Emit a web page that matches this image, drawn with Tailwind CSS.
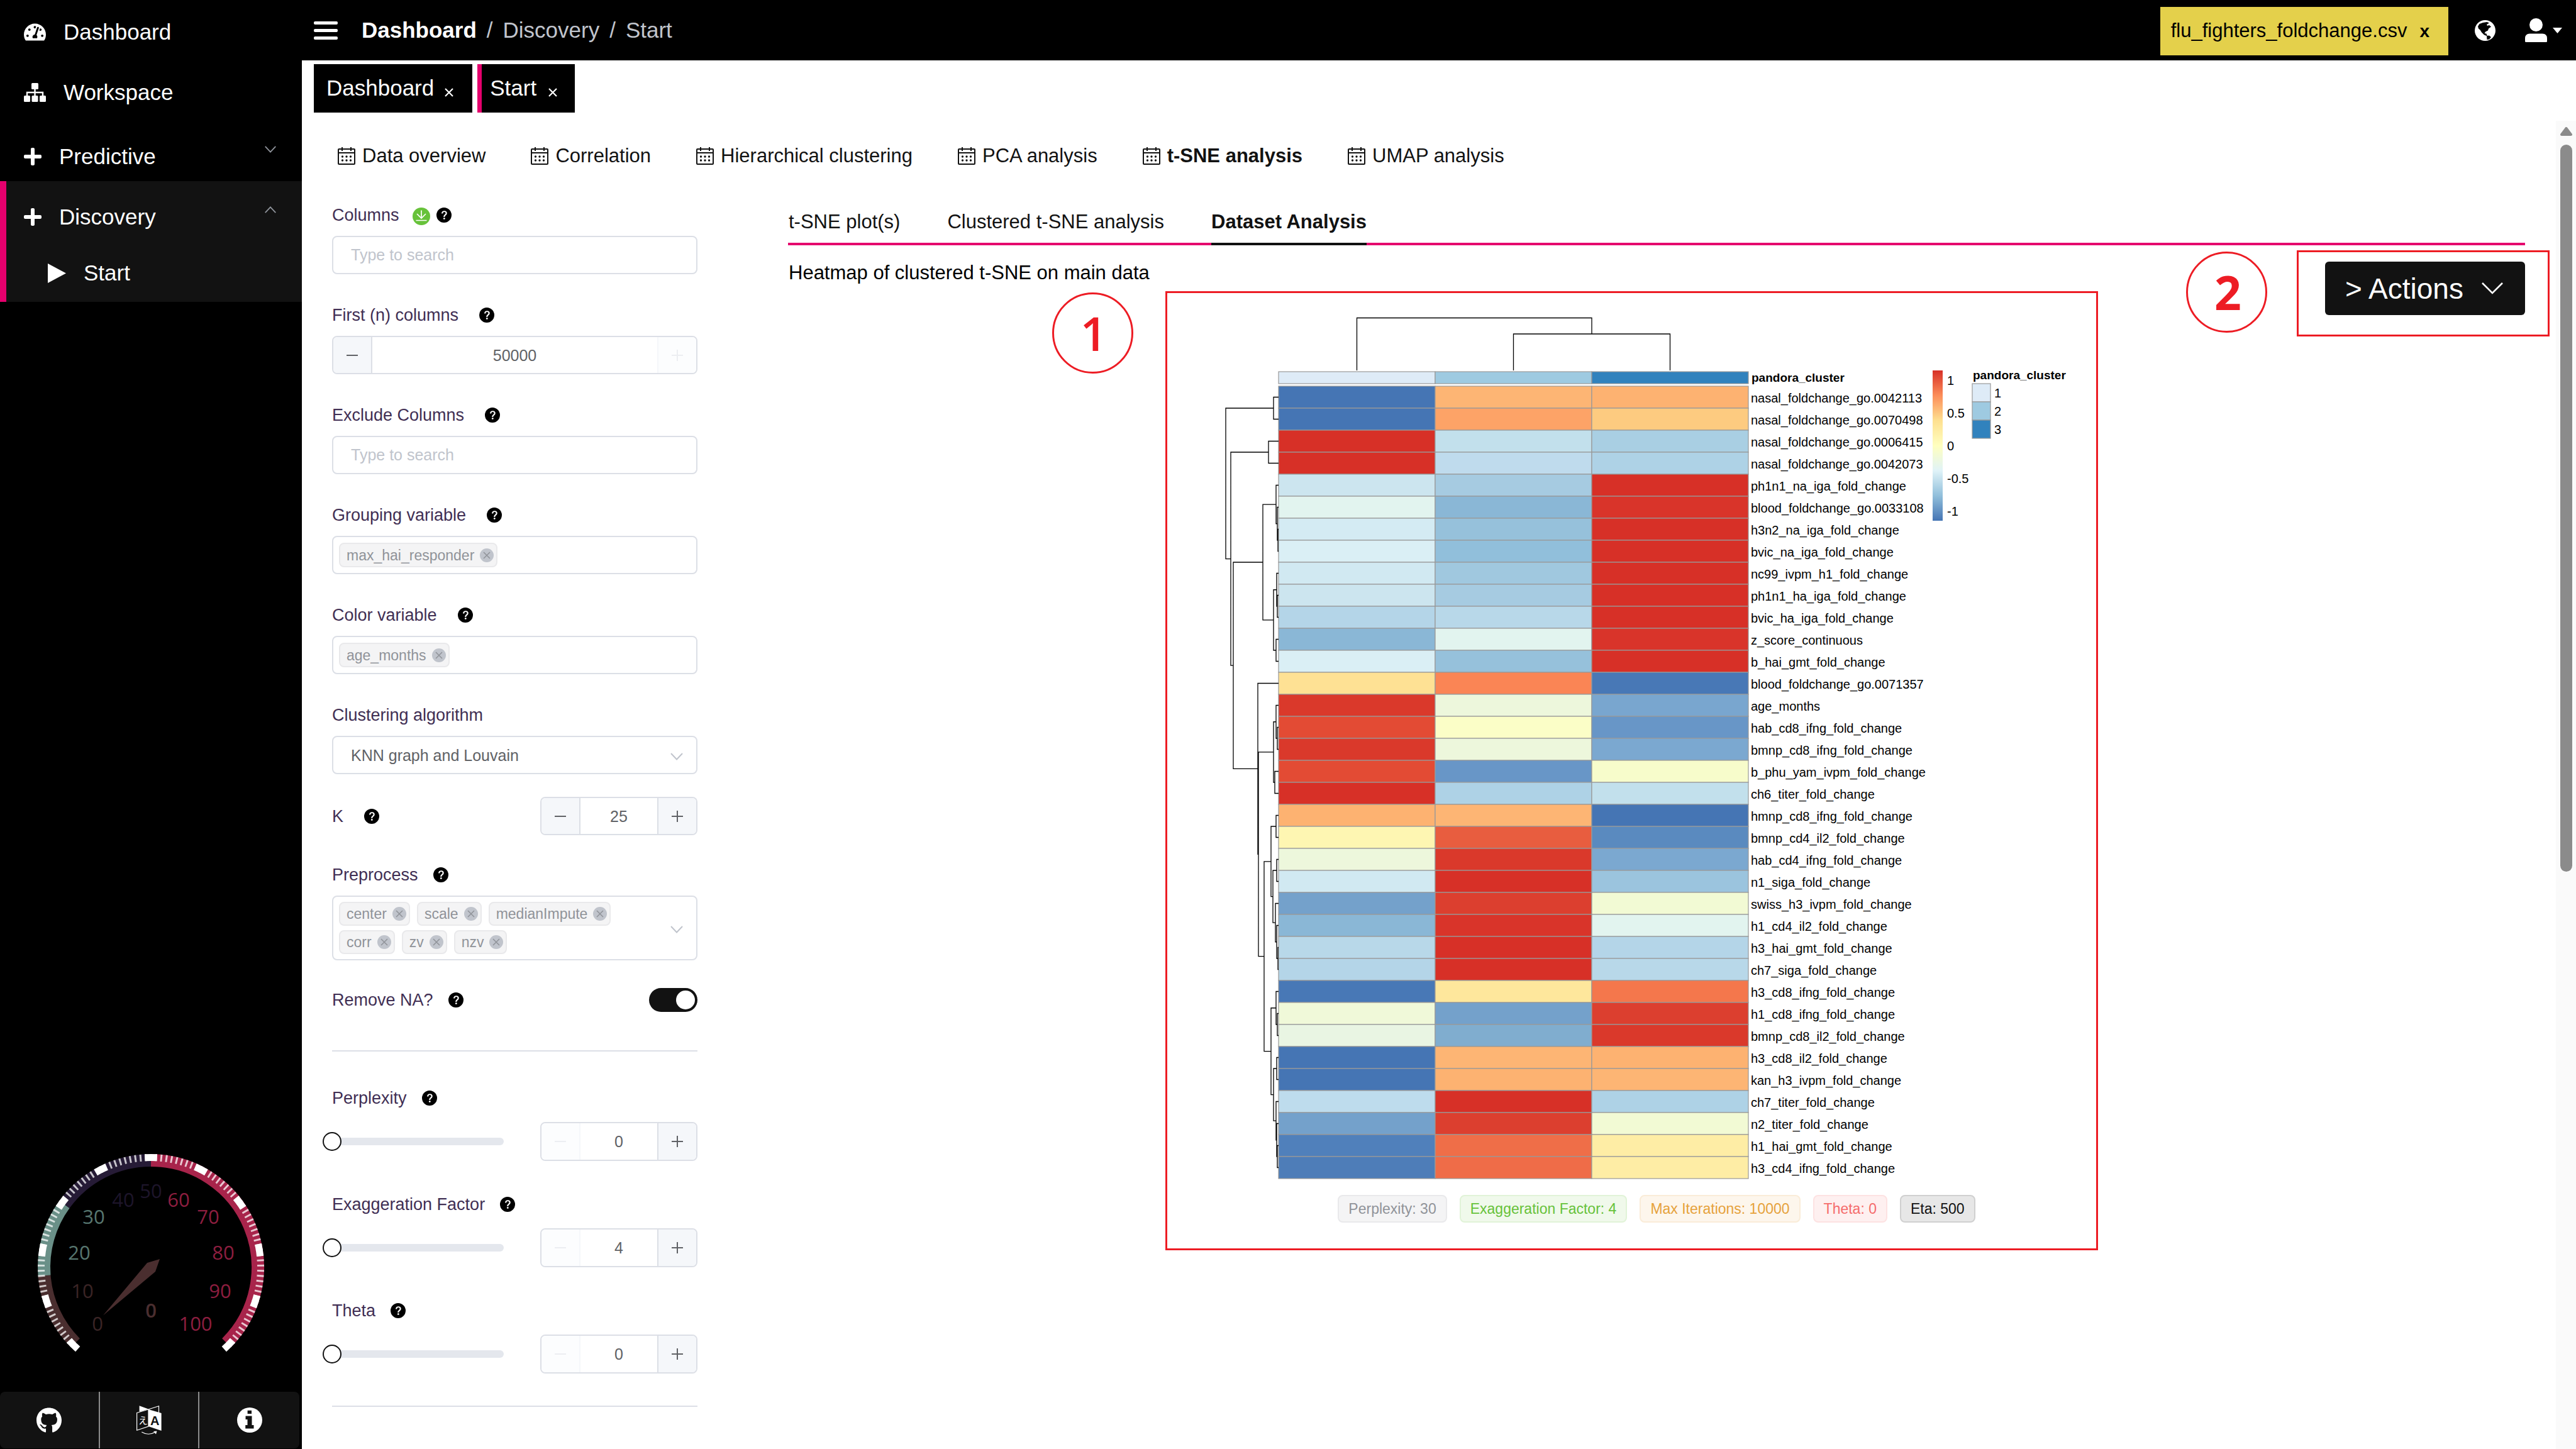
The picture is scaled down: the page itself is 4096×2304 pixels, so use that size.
<!DOCTYPE html>
<html lang="en">
<head>
<meta charset="utf-8">
<title>Dashboard / Discovery / Start</title>
<script src="https://cdn.jsdelivr.net/npm/@tailwindcss/browser@4"></script>
</head>
<body class="flex h-screen overflow-hidden bg-white font-['Liberation_Sans',Arial,sans-serif] text-[31px] text-[#121212]">

<svg class="hidden" aria-hidden="true">
  <symbol id="i-help" viewBox="64 64 896 896"><path d="M512 64a448 448 0 1 1 0 896 448 448 0 0 1 0-896m23.744 191.488c-52.096 0-92.928 14.784-123.2 44.352-30.976 29.568-45.76 70.4-45.76 122.496h80.256c0-29.568 5.632-52.8 17.6-68.992 13.376-19.712 35.2-28.864 66.176-28.864 23.936 0 42.944 6.336 56.32 19.712 12.672 13.376 19.712 31.68 19.712 54.912 0 17.6-6.336 34.496-19.008 49.984l-8.448 9.856c-45.76 40.832-73.216 70.4-82.368 89.408-9.856 19.008-14.08 42.24-14.08 68.992v9.856h80.96v-9.856c0-16.896 3.52-31.68 10.56-45.76 6.336-12.672 15.488-24.64 28.16-35.2 33.792-29.568 54.208-48.576 60.544-55.616 16.896-22.528 26.048-51.392 26.048-86.592 0-42.944-14.08-76.736-42.24-101.376-28.16-25.344-65.472-37.312-111.232-37.312zm-12.672 406.208a54.272 54.272 0 0 0-38.72 14.784 49.408 49.408 0 0 0-15.488 38.016c0 15.488 4.928 28.16 15.488 38.016A54.848 54.848 0 0 0 523.072 768c15.488 0 28.16-4.928 38.72-14.784a51.52 51.52 0 0 0 16.192-38.72 51.968 51.968 0 0 0-15.488-38.016 55.936 55.936 0 0 0-39.424-14.784z"/></symbol>
  <symbol id="i-cal" viewBox="0 0 28 28"><g fill="none" stroke="currentColor" stroke-width="2"><rect x="1" y="3" width="26" height="24" rx="1"/><path d="M1 9h26M7 0v6M21 0v6" stroke-width="2"/></g><g fill="currentColor"><circle cx="7.500" cy="15" r="1.700"/><circle cx="14" cy="15" r="1.700"/><circle cx="20.500" cy="15" r="1.700"/><circle cx="7.500" cy="21" r="1.700"/><circle cx="14" cy="21" r="1.700"/><circle cx="20.500" cy="21" r="1.700"/></g></symbol>
  <symbol id="i-plus" viewBox="0 32 448 448"><path fill="currentColor" d="M416 208H272V64c0-17.670-14.330-32-32-32h-32c-17.670 0-32 14.330-32 32v144H32c-17.670 0-32 14.330-32 32v32c0 17.670 14.330 32 32 32h144v144c0 17.670 14.330 32 32 32h32c17.670 0 32-14.330 32-32V304h144c17.670 0 32-14.330 32-32v-32c0-17.670-14.330-32-32-32z"/></symbol>
  <symbol id="i-down" viewBox="0 0 20 12"><path d="M1 1l9 9.500L19 1" fill="none" stroke="currentColor" stroke-width="2"/></symbol>
  <symbol id="i-x" viewBox="0 0 14 14"><path d="M1 1l12 12M13 1L1 13" fill="none" stroke="currentColor" stroke-width="2.200"/></symbol>
  <symbol id="i-close" viewBox="0 0 22 22"><circle cx="11" cy="11" r="11" fill="#c0c4cc"/><path d="M6 6l10 10M16 6L6 16" fill="none" stroke="#909399" stroke-width="1.500"/></symbol>
  <symbol id="i-minus" viewBox="0 0 18 18"><path d="M0 9h18" stroke="currentColor" stroke-width="2"/></symbol>
  <symbol id="i-add" viewBox="0 0 18 18"><path d="M0 9h18M9 0v18" stroke="currentColor" stroke-width="2"/></symbol>
</svg>

<aside class="flex w-[480px] shrink-0 flex-col bg-black text-[35px] leading-10 text-white">
  <nav class="flex flex-col">
    <a href="#" class="flex h-24 items-center gap-[28px] pl-[38px] pt-1.5">
      <svg class="h-7 w-[35px]" viewBox="0 32 576 448"><path fill="currentColor" d="M288 32C128.940 32 0 160.940 0 320c0 52.800 14.250 102.260 39.060 144.800 5.610 9.620 16.300 15.200 27.440 15.200h443c11.140 0 21.830-5.580 27.440-15.200C561.750 422.260 576 372.800 576 320c0-159.060-128.940-288-288-288zm0 64c14.710 0 26.580 10.130 30.320 23.650-1.110 2.260-2.640 4.230-3.450 6.670l-9.220 27.670c-5.130 3.490-10.970 6.010-17.640 6.010-17.670 0-32-14.330-32-32S270.330 96 288 96zM96 384c-17.670 0-32-14.330-32-32s14.330-32 32-32 32 14.330 32 32-14.330 32-32 32zm48-160c-17.670 0-32-14.330-32-32s14.330-32 32-32 32 14.330 32 32-14.330 32-32 32zm246.770-72.410l-61.330 184C343.130 347.330 352 364.540 352 384c0 11.720-3.380 22.550-8.880 32H232.880c-5.500-9.450-8.880-20.280-8.880-32 0-33.940 26.500-61.430 59.900-63.590l61.340-184.010c4.170-12.560 17.730-19.450 30.360-15.170 12.570 4.190 19.350 17.790 15.170 30.360zm14.660 57.200l15.520-46.550c3.470-1.290 7.130-2.230 11.050-2.230 17.670 0 32 14.330 32 32s-14.330 32-32 32c-11.380-.010-20.890-6.280-26.570-15.220zM480 384c-17.670 0-32-14.330-32-32s14.330-32 32-32 32 14.330 32 32-14.330 32-32 32z"/></svg>
      Dashboard
    </a>
    <a href="#" class="flex h-24 items-center gap-[28px] pl-[38px] pt-1.5">
      <svg class="h-[30px] w-[35px]" viewBox="0 0 35 30" fill="currentColor"><rect x="12" y="0" width="11" height="10" rx="1.500"/><rect x="0" y="20" width="10" height="10" rx="1.500"/><rect x="12.500" y="20" width="10" height="10" rx="1.500"/><rect x="25" y="20" width="10" height="10" rx="1.500"/><path d="M17.500 9v12M5 21v-6h25v6" fill="none" stroke="currentColor" stroke-width="2.400"/></svg>
      Workspace
    </a>
    <a href="#" class="flex h-24 items-center pl-[38px] pr-10 pt-[18px]">
      <svg class="mr-[28px] size-7"><use href="#i-plus"/></svg>
      Predictive
      <svg class="mb-6 ml-auto h-[11px] w-5 text-[#8f939b]"><use href="#i-down"/></svg>
    </a>
    <div class="border-l-[10px] border-[#e5006d] bg-[#121212]">
      <a href="#" class="flex h-24 items-center pl-7 pr-10 pt-[18px]">
        <svg class="mr-[28px] size-7"><use href="#i-plus"/></svg>
        Discovery
        <svg class="mb-6 ml-auto h-[11px] w-5 rotate-180 text-[#8f939b]"><use href="#i-down"/></svg>
      </a>
      <a href="#" class="flex h-24 items-center gap-7 pl-[66px] pt-1">
        <svg class="h-[31px] w-[29px]" viewBox="0 0 29 31"><path d="M0 0l29 15.500L0 31z" fill="currentColor"/></svg>
        Start
      </a>
    </div>
  </nav>

  <svg class="mx-auto mb-12 mt-auto h-[340px] w-[400px] shrink-0" viewBox="-200 -190 400 340" font-family="Open Sans, Noto Sans, sans-serif" font-size="31" text-anchor="middle">
    <g fill="none" stroke-width="20">
      <path stroke="#4a2e2f" d="M-120.200 120.200A170 170 0 0 1 -169.500 13.300"/>
      <path stroke="#6a9088" d="M-169.500 13.300A170 170 0 0 1 -137.500 -99.900"/>
      <path stroke="#261b36" d="M-137.500 -99.900A170 170 0 0 1 0 -170"/>
      <path stroke="#a8244b" d="M0 -170A170 170 0 0 1 120.200 120.200"/>
    </g>
    <path fill="none" stroke="#ffffff" stroke-opacity=".75" stroke-width="11" pathLength="100" stroke-dasharray="0.360 0.640" stroke-dashoffset="0.180" d="M-123.400 123.400A174.500 174.500 0 1 1 123.400 123.400"/>
    <path fill="none" stroke="#ffffff" stroke-width="11" pathLength="276.400" stroke-dasharray="6.400 20.600" d="M-116.300 130.100A174.500 174.500 0 1 1 116.300 130.100"/>
    <path fill="#4a2e2f" d="M-76 76.500L-6 -7L14 -13L7 7z"/>
    <g fill="#3a2425"><text x="-85" y="101">0</text><text x="-109" y="49">10</text></g>
    <g fill="#57766f"><text x="-114" y="-12">20</text><text x="-91" y="-69">30</text></g>
    <g fill="#1d152a"><text x="-44" y="-96">40</text><text x="0" y="-110">50</text></g>
    <g fill="#8c1e3f"><text x="44" y="-96">60</text><text x="91" y="-69">70</text><text x="115" y="-12">80</text><text x="110" y="49">90</text><text x="71" y="101">100</text></g>
    <text x="0" y="80" fill="#4a2e2f" font-weight="600">0</text>
  </svg>

  <div class="mb-px grid h-[90px] w-[476px] shrink-0 grid-cols-3 divide-x-2 divide-[#8c8c8c] rounded-lg bg-[#121212]">
    <a href="#" aria-label="GitHub" class="grid place-items-center"><svg class="size-10" viewBox="0 8 496 484"><path fill="currentColor" d="M165.900 397.400c0 2-2.300 3.600-5.200 3.600-3.300.300-5.600-1.300-5.600-3.600 0-2 2.300-3.600 5.200-3.600 3-.300 5.600 1.300 5.600 3.600zM244.800 8C106.100 8 0 113.300 0 252c0 110.900 69.800 205.800 169.500 239.200 12.800 2.300 17.300-5.600 17.300-12.100 0-6.200-.300-40.400-.300-61.400 0 0-70 15-84.700-29.800 0 0-11.400-29.100-27.800-36.600 0 0-22.900-15.700 1.600-15.400 0 0 24.900 2 38.600 25.800 21.900 38.600 58.600 27.500 72.900 20.900 2.300-16 8.800-27.100 16-33.700-55.900-6.200-112.300-14.300-112.300-110.500 0-27.500 7.600-41.300 23.600-58.900-2.600-6.500-11.100-33.300 2.600-67.900 20.900-6.500 69 27 69 27 20-5.600 41.500-8.500 62.800-8.500s42.800 2.900 62.800 8.500c0 0 48.100-33.600 69-27 13.700 34.700 5.200 61.400 2.600 67.900 16 17.700 25.800 31.500 25.800 58.900 0 96.500-58.900 104.200-114.800 110.500 9.200 7.900 17 22.900 17 46.400 0 33.700-.300 75.400-.300 83.600 0 6.500 4.600 14.400 17.300 12.100C428.200 457.800 496 362.900 496 252 496 113.300 383.500 8 244.800 8z"/></svg></a>
    <a href="#" aria-label="Language" class="grid place-items-center"><svg class="h-[46px] w-10" viewBox="0 0 40 46"><g fill="none" stroke="#fff" stroke-width="1.200"><path d="M.600 11.500L19 6v27L.600 39.200z"/><path d="M19 6L35.500 .800V11"/><path d="M8.300 42Q19 48.500 30 42"/></g><path fill="#fff" d="M19 6l20.600 6v28L19 33zM4.600 .300L19 5.500L4.600 9.800zM27 41l5.500-.500-1.500 5z"/><text x="3" y="29" font-size="15" fill="#fff" font-family="Noto Sans CJK JP, sans-serif">え</text><text x="22" y="31" font-size="20" font-weight="700" fill="#121212" font-family="Liberation Sans, sans-serif">A</text></svg></a>
    <a href="#" aria-label="About" class="grid place-items-center"><svg class="size-10" viewBox="0 0 40 40"><circle cx="20" cy="20" r="20" fill="#fff"/><path fill="#121212" d="M16.600 4.800H23V10H16.600zM13.500 13.600H23.500V28H26.500V33.500H13.200V28H16.500V19H13.500z"/></svg></a>
  </div>
</aside>

<div class="flex min-w-0 flex-1 flex-col">
  <header class="flex h-24 shrink-0 items-center bg-black pl-[19px] text-[35px] text-[#c0c4cc]">
    <button aria-label="Menu" class="text-white"><svg class="h-[29px] w-[38px]" viewBox="0 0 38 29" fill="currentColor"><rect width="38" height="5" rx="2"/><rect y="12" width="38" height="5" rx="2"/><rect y="24" width="38" height="5" rx="2"/></svg></button>
    <ol class="ml-[38px] flex gap-4">
      <li><a href="#" class="font-bold text-white">Dashboard</a></li><li>/</li>
      <li><a href="#">Discovery</a></li><li>/</li>
      <li>Start</li>
    </ol>
    <div class="ml-auto mr-[42px] mt-[3px] flex h-[77px] items-center gap-5 bg-[#e4d04b] pl-[17px] pr-[30px] text-[31px] text-black">
      flu_fighters_foldchange.csv <button class="text-[28px] font-bold">x</button>
    </div>
    <button aria-label="Language" class="mr-[47px]"><svg class="size-[33px]" viewBox="0 0 33 33"><circle cx="16.500" cy="16.500" r="16.500" fill="#fff"/><path d="M5 10l2.500-4L13 4l6.500-1 3.500 1.500-4 2.500 1 2 3-1 3 2.500-4 3-1 3-4 2-1.500 2.500 3 .500 1.500 4-5-2-4-4-2.500-4-2.500-2zM19 25l4-.500 3 2.500-3 3.500-3.500.500z" fill="#000"/></svg></button>
    <button aria-label="Account" class="mr-[22px] flex items-center gap-[9px]"><svg class="h-[38px] w-[35px]" viewBox="0 0 35 38" fill="#fff"><ellipse cx="17.500" cy="10.500" rx="10.500" ry="10.500"/><path d="M0 36.500V32q0-7.500 7.500-7.500h20Q35 24.500 35 32v4.500Q35 38 33.500 38h-32Q0 38 0 36.500z"/></svg><svg class="h-[9px] w-[15px]" viewBox="0 0 15 9"><path d="M0 0h15L7.500 9z" fill="#fff"/></svg></button>
  </header>

  <div class="flex h-24 shrink-0 gap-2 px-[19px] pt-1.5 text-[35px] text-white">
    <a href="#" class="flex h-[77px] items-center gap-[17px] bg-black pl-5 pr-[30px]">Dashboard <svg class="mt-3 size-3.5"><use href="#i-x"/></svg></a>
    <a href="#" class="flex h-[77px] items-center gap-[19px] border-l-[7px] border-[#e5006d] bg-black pl-[13px] pr-7">Start <svg class="mt-3 size-3.5"><use href="#i-x"/></svg></a>
  </div>

  <div class="flex min-h-0 flex-1">
    <main class="min-w-0 flex-1 overflow-hidden pl-12 pr-[49px] pt-[38px] leading-9">
      <nav class="flex gap-[72px] pl-[9px]">
        <a href="#" class="flex items-center gap-[11px]"><svg class="size-7"><use href="#i-cal"/></svg>Data overview</a>
        <a href="#" class="flex items-center gap-[11px]"><svg class="size-7"><use href="#i-cal"/></svg>Correlation</a>
        <a href="#" class="flex items-center gap-[11px]"><svg class="size-7"><use href="#i-cal"/></svg>Hierarchical clustering</a>
        <a href="#" class="flex items-center gap-[11px]"><svg class="size-7"><use href="#i-cal"/></svg>PCA analysis</a>
        <a href="#" class="flex items-center gap-[11px] font-bold"><svg class="size-7"><use href="#i-cal"/></svg>t-SNE analysis</a>
        <a href="#" class="flex items-center gap-[11px]"><svg class="size-7"><use href="#i-cal"/></svg>UMAP analysis</a>
      </nav>

      <div class="mt-[58px] flex gap-36">
        <form class="flex w-[581px] shrink-0 flex-col text-[27px] text-[#412f54]">
          <div class="flex h-9 items-center"><label for="columns">Columns</label><svg class="ml-[21px] mt-1 size-7" viewBox="0 0 28 28"><circle cx="14" cy="14" r="14" fill="#67c23a"/><path d="M14 4.500v12M7 10l7 7 7-7M5.500 20.500h17" fill="none" stroke="#fff" stroke-width="1.700"/></svg><svg class="ml-2.5 size-6"><use href="#i-help"/></svg></div>
          <input id="columns" placeholder="Type to search" class="mt-[15px] h-[61px] rounded-lg border-2 border-[#dcdfe6] px-7 text-[25px] placeholder:text-[#c0c4cc]">

          <div class="mt-[47px] flex h-9 items-center gap-[33px]"><label for="firstn">First (n) columns</label><svg class="size-6"><use href="#i-help"/></svg></div>
          <div class="mt-[15px] flex h-[61px] overflow-hidden rounded-lg border-2 border-[#dcdfe6] text-[25px] text-[#606266]">
            <button type="button" aria-label="Decrease" class="grid w-[62px] place-items-center border-r-2 border-[#dcdfe6] bg-[#f5f7fa]"><svg class="size-[18px]"><use href="#i-minus"/></svg></button>
            <input id="firstn" value="50000" class="min-w-0 flex-1 text-center">
            <button type="button" disabled aria-label="Increase" class="grid w-[62px] place-items-center border-l-2 border-[#f5f7fa] bg-[#fcfdfe] text-[#eceef2]"><svg class="size-[18px]"><use href="#i-add"/></svg></button>
          </div>

          <div class="mt-[47px] flex h-9 items-center gap-[33px]"><label for="exclude">Exclude Columns</label><svg class="size-6"><use href="#i-help"/></svg></div>
          <input id="exclude" placeholder="Type to search" class="mt-[15px] h-[61px] rounded-lg border-2 border-[#dcdfe6] px-7 text-[25px] placeholder:text-[#c0c4cc]">

          <div class="mt-[47px] flex h-9 items-center gap-[33px]"><label for="grouping">Grouping variable</label><svg class="size-6"><use href="#i-help"/></svg></div>
          <div class="mt-[15px] flex h-[61px] items-center rounded-lg border-2 border-[#dcdfe6] px-[9px] text-[23px] text-[#909399]">
            <span class="flex h-[39px] items-center gap-[9px] rounded-lg border-2 border-[#e9e9eb] bg-[#f4f4f5] pl-2.5 pr-1">max_hai_responder<svg class="size-[22px]"><use href="#i-close"/></svg></span>
            <input id="grouping" class="min-w-0 flex-1">
          </div>

          <div class="mt-[47px] flex h-9 items-center gap-[33px]"><label for="color">Color variable</label><svg class="size-6"><use href="#i-help"/></svg></div>
          <div class="mt-[15px] flex h-[61px] items-center rounded-lg border-2 border-[#dcdfe6] px-[9px] text-[23px] text-[#909399]">
            <span class="flex h-[39px] items-center gap-[9px] rounded-lg border-2 border-[#e9e9eb] bg-[#f4f4f5] pl-2.5 pr-1">age_months<svg class="size-[22px]"><use href="#i-close"/></svg></span>
            <input id="color" class="min-w-0 flex-1">
          </div>

          <label for="algo" class="mt-[47px] h-9">Clustering algorithm</label>
          <div class="mt-[15px] grid h-[61px] items-center">
            <select id="algo" class="col-start-1 row-start-1 h-full appearance-none rounded-lg border-2 border-[#dcdfe6] px-7 text-[25px] text-[#606266]"><option>KNN graph and Louvain</option></select>
            <svg class="pointer-events-none col-start-1 row-start-1 mr-[23px] mt-1 h-3 w-5 justify-self-end text-[#c0c4cc]"><use href="#i-down"/></svg>
          </div>

          <div class="mt-9 flex h-[61px] items-center gap-[33px]"><label for="k">K</label><svg class="size-6"><use href="#i-help"/></svg>
            <div class="ml-auto flex h-full w-[250px] overflow-hidden rounded-lg border-2 border-[#dcdfe6] text-[25px] text-[#606266]">
              <button type="button" aria-label="Decrease" class="grid w-[62px] shrink-0 place-items-center border-r-2 border-[#dcdfe6] bg-[#f5f7fa]"><svg class="size-[18px]"><use href="#i-minus"/></svg></button>
              <input id="k" value="25" class="min-w-0 flex-1 text-center">
              <button type="button" aria-label="Increase" class="grid w-[62px] shrink-0 place-items-center border-l-2 border-[#dcdfe6] bg-[#f5f7fa]"><svg class="size-[18px]"><use href="#i-add"/></svg></button>
            </div>
          </div>

          <div class="mt-[45px] flex h-9 items-center gap-6"><label for="preprocess">Preprocess</label><svg class="size-6"><use href="#i-help"/></svg></div>
          <div class="mt-[15px] flex h-[103px] items-center justify-between rounded-lg border-2 border-[#dcdfe6] pl-[9px] pr-[21px] text-[23px] text-[#909399]">
            <div class="flex w-[460px] flex-wrap gap-x-[11px] gap-y-[7px]">
              <span class="flex h-[38px] items-center gap-[9px] rounded-lg border-2 border-[#e9e9eb] bg-[#f4f4f5] pl-2.5 pr-1">center<svg class="size-[22px]"><use href="#i-close"/></svg></span>
              <span class="flex h-[38px] items-center gap-[9px] rounded-lg border-2 border-[#e9e9eb] bg-[#f4f4f5] pl-2.5 pr-1">scale<svg class="size-[22px]"><use href="#i-close"/></svg></span>
              <span class="flex h-[38px] items-center gap-[9px] rounded-lg border-2 border-[#e9e9eb] bg-[#f4f4f5] pl-2.5 pr-1">medianImpute<svg class="size-[22px]"><use href="#i-close"/></svg></span>
              <span class="flex h-[38px] items-center gap-[9px] rounded-lg border-2 border-[#e9e9eb] bg-[#f4f4f5] pl-2.5 pr-1">corr<svg class="size-[22px]"><use href="#i-close"/></svg></span>
              <span class="flex h-[38px] items-center gap-[9px] rounded-lg border-2 border-[#e9e9eb] bg-[#f4f4f5] pl-2.5 pr-1">zv<svg class="size-[22px]"><use href="#i-close"/></svg></span>
              <span class="flex h-[38px] items-center gap-[9px] rounded-lg border-2 border-[#e9e9eb] bg-[#f4f4f5] pl-2.5 pr-1">nzv<svg class="size-[22px]"><use href="#i-close"/></svg></span>
            </div>
            <button type="button" id="preprocess" aria-label="Open" class="mt-1"><svg class="h-3 w-5 text-[#c0c4cc]"><use href="#i-down"/></svg></button>
          </div>

          <div class="mt-11 flex h-[38px] items-center gap-6"><label for="na">Remove NA?</label><svg class="size-6"><use href="#i-help"/></svg>
            <input id="na" type="checkbox" checked class="ml-auto flex h-[38px] w-[77px] appearance-none items-center justify-end rounded-full bg-[#121212] pr-1 before:size-[30px] before:rounded-full before:bg-white before:content-['']">
          </div>

          <hr class="mb-14 mt-[61px] border-t-2 border-[#dcdfe6]">

          <div class="flex flex-col gap-[51px]">
            <div>
              <div class="flex h-9 items-center gap-6"><label for="perplexity">Perplexity</label><svg class="size-6"><use href="#i-help"/></svg></div>
              <div class="mt-5 flex h-[62px] items-center justify-between">
                <div class="relative h-3 w-[273px] rounded-full bg-[#e4e7ed]"><input id="perplexity" type="range" min="0" max="100" value="0" class="absolute -left-[15px] -top-[9px] h-[30px] w-[303px] appearance-none bg-transparent [&::-webkit-slider-thumb]:size-[30px] [&::-webkit-slider-thumb]:appearance-none [&::-webkit-slider-thumb]:rounded-full [&::-webkit-slider-thumb]:border-2 [&::-webkit-slider-thumb]:border-[#121212] [&::-webkit-slider-thumb]:bg-white"></div>
                <div class="flex h-full w-[250px] overflow-hidden rounded-lg border-2 border-[#dcdfe6] text-[25px] text-[#606266]">
                  <button type="button" disabled aria-label="Decrease" class="grid w-[62px] shrink-0 place-items-center border-r-2 border-[#f5f7fa] bg-[#fcfdfe] text-[#eceef2]"><svg class="size-[18px]"><use href="#i-minus"/></svg></button>
                  <input aria-label="Perplexity value" value="0" class="min-w-0 flex-1 text-center">
                  <button type="button" aria-label="Increase" class="grid w-[62px] shrink-0 place-items-center border-l-2 border-[#dcdfe6] bg-[#f5f7fa]"><svg class="size-[18px]"><use href="#i-add"/></svg></button>
                </div>
              </div>
            </div>
            <div>
              <div class="flex h-9 items-center gap-6"><label for="exaggeration">Exaggeration Factor</label><svg class="size-6"><use href="#i-help"/></svg></div>
              <div class="mt-5 flex h-[62px] items-center justify-between">
                <div class="relative h-3 w-[273px] rounded-full bg-[#e4e7ed]"><input id="exaggeration" type="range" min="4" max="100" value="4" class="absolute -left-[15px] -top-[9px] h-[30px] w-[303px] appearance-none bg-transparent [&::-webkit-slider-thumb]:size-[30px] [&::-webkit-slider-thumb]:appearance-none [&::-webkit-slider-thumb]:rounded-full [&::-webkit-slider-thumb]:border-2 [&::-webkit-slider-thumb]:border-[#121212] [&::-webkit-slider-thumb]:bg-white"></div>
                <div class="flex h-full w-[250px] overflow-hidden rounded-lg border-2 border-[#dcdfe6] text-[25px] text-[#606266]">
                  <button type="button" disabled aria-label="Decrease" class="grid w-[62px] shrink-0 place-items-center border-r-2 border-[#f5f7fa] bg-[#fcfdfe] text-[#eceef2]"><svg class="size-[18px]"><use href="#i-minus"/></svg></button>
                  <input aria-label="Exaggeration value" value="4" class="min-w-0 flex-1 text-center">
                  <button type="button" aria-label="Increase" class="grid w-[62px] shrink-0 place-items-center border-l-2 border-[#dcdfe6] bg-[#f5f7fa]"><svg class="size-[18px]"><use href="#i-add"/></svg></button>
                </div>
              </div>
            </div>
            <div>
              <div class="flex h-9 items-center gap-6"><label for="theta">Theta</label><svg class="size-6"><use href="#i-help"/></svg></div>
              <div class="mt-5 flex h-[62px] items-center justify-between">
                <div class="relative h-3 w-[273px] rounded-full bg-[#e4e7ed]"><input id="theta" type="range" min="0" max="100" value="0" class="absolute -left-[15px] -top-[9px] h-[30px] w-[303px] appearance-none bg-transparent [&::-webkit-slider-thumb]:size-[30px] [&::-webkit-slider-thumb]:appearance-none [&::-webkit-slider-thumb]:rounded-full [&::-webkit-slider-thumb]:border-2 [&::-webkit-slider-thumb]:border-[#121212] [&::-webkit-slider-thumb]:bg-white"></div>
                <div class="flex h-full w-[250px] overflow-hidden rounded-lg border-2 border-[#dcdfe6] text-[25px] text-[#606266]">
                  <button type="button" disabled aria-label="Decrease" class="grid w-[62px] shrink-0 place-items-center border-r-2 border-[#f5f7fa] bg-[#fcfdfe] text-[#eceef2]"><svg class="size-[18px]"><use href="#i-minus"/></svg></button>
                  <input aria-label="Theta value" value="0" class="min-w-0 flex-1 text-center">
                  <button type="button" aria-label="Increase" class="grid w-[62px] shrink-0 place-items-center border-l-2 border-[#dcdfe6] bg-[#f5f7fa]"><svg class="size-[18px]"><use href="#i-add"/></svg></button>
                </div>
              </div>
            </div>
          </div>
          <hr class="mt-[51px] border-t-2 border-[#dcdfe6]">
        </form>

        <section class="relative min-w-0 flex-1">
          <nav class="flex h-[66px] items-stretch gap-[75px] border-b-4 border-[#e5006d] pl-px pt-[11px]">
            <a href="#">t-SNE plot(s)</a>
            <a href="#">Clustered t-SNE analysis</a>
            <a href="#" class="-mb-1 border-b-4 border-[#121212] font-bold">Dataset Analysis</a>
          </nav>
          <h2 class="mt-[26px] pl-px text-black">Heatmap of clustered t-SNE on main data</h2>

          <figure class="relative mx-auto mt-[11px] flex h-[1525px] w-[1563px] flex-col items-center">
            <svg id="heatmap" class="h-[1420px] w-full shrink-0" viewBox="0 0 1563 1420" font-family="Liberation Sans, Arial, sans-serif" font-size="20"></svg>
            <figcaption class="mt-[17px] flex gap-5 text-[23px]">
              <span class="flex h-11 items-center rounded-lg border-2 border-[#e9e9eb] bg-[#f4f4f5] px-[15px] text-[#909399]">Perplexity: 30</span>
              <span class="flex h-11 items-center rounded-lg border-2 border-[#e1f3d8] bg-[#f0f9eb] px-[15px] text-[#67c23a]">Exaggeration Factor: 4</span>
              <span class="flex h-11 items-center rounded-lg border-2 border-[#faecd8] bg-[#fdf6ec] px-[15px] text-[#e6a23c]">Max Iterations: 10000</span>
              <span class="flex h-11 items-center rounded-lg border-2 border-[#fde2e2] bg-[#fef0f0] px-[15px] text-[#f56c6c]">Theta: 0</span>
              <span class="flex h-11 items-center rounded-lg border-2 border-[#d0d0d0] bg-[#e7e7e7] px-[15px] text-[#121212]">Eta: 500</span>
            </figcaption>
            <div class="absolute inset-y-0 left-0 right-[80px] border-[3px] border-[#ed1c24]"></div>
            <div class="absolute -left-[180px] top-0.5 grid size-[129px] place-items-center rounded-full border-[3px] border-[#ed1c24] pl-1 font-['Open_Sans',sans-serif] text-[75px] font-semibold leading-none text-[#ed1c24]">1</div>
          </figure>

          <button class="absolute right-0 top-[92px] flex h-[85px] w-[318px] items-center gap-7 rounded-md bg-[#121212] pl-8 text-[46px] text-white">&gt; Actions <svg class="h-[19px] w-9" viewBox="0 0 36 19"><path d="M2 1l16 16L34 1" fill="none" stroke="#fff" stroke-width="2.600"/></svg></button>
          <div class="absolute -right-[39px] top-[74px] h-[137px] w-[402px] border-[3px] border-[#ed1c24]"></div>
          <div class="absolute right-[410px] top-[76px] grid size-[129px] place-items-center rounded-full border-[3px] border-[#ed1c24] pl-1 font-['Open_Sans',sans-serif] text-[75px] font-bold leading-none text-[#ed1c24]">2</div>
        </section>
      </div>
    </main>
    <div class="flex w-8 shrink-0 flex-col items-center bg-[#fafafa] pt-2.5">
      <svg class="h-3.5 w-[19px]" viewBox="0 0 19 14"><path d="M9.500 2L17 12H2z" fill="#8b8b8b" stroke="#8b8b8b" stroke-width="4" stroke-linejoin="round"/></svg>
      <div class="mt-3.5 h-[55%] w-[19px] rounded-full bg-[#8b8b8b]"></div>
    </div>
  </div>
</div>

<script>
// Heatmap rows: label and one colour per cluster column
const rows = `
nasal_foldchange_go.0042113 4575b4 fdb574 fdb271
nasal_foldchange_go.0070498 4575b4 fda367 fdcb80
nasal_foldchange_go.0006415 d73027 c2e0ec a9cfe3
nasal_foldchange_go.0042073 d73027 bfdbed aed2e6
ph1n1_na_iga_fold_change cce5ef a6cbe1 d73027
blood_foldchange_go.0033108 e2f4ef 8ab7d6 d9342a
h3n2_na_iga_fold_change d4ebf3 96c1db d73027
bvic_na_iga_fold_change daeff5 91bfdb d73027
nc99_ivpm_h1_fold_change d1e9f2 a0c8df d73027
ph1n1_ha_iga_fold_change cce5ef a6cbe1 d73027
bvic_ha_iga_fold_change b4d5e8 b8d8e9 d73027
z_score_continuous 8ab7d6 e2f4ef d9342a
b_hai_gmt_fold_change daeff5 96c1db d73027
blood_foldchange_go.0071357 fee194 fa8555 4878b6
age_months da392b edf7dc 79a6cf
hab_cd8_ifng_fold_change e34b34 fbfec7 6896c7
bmnp_cd8_ifng_fold_change da392b edf7dc 7ba8d0
b_phu_yam_ivpm_fold_change e34b34 6896c7 f7fccb
ch6_titer_fold_change d73027 aed2e6 c2e0ec
hmnp_cd8_ifng_fold_change fdb271 fdb574 4575b4
bmnp_cd4_il2_fold_change fef6b2 e85d3f 5a8abf
hab_cd4_ifng_fold_change edf7dc da392b 7ba8d0
n1_siga_fold_change d1e9f2 d73027 9bc4de
swiss_h3_ivpm_fold_change 74a1cb dc3f2f f2fad4
h1_cd4_il2_fold_change 8ab7d6 d9342a e2f4ef
h3_hai_gmt_fold_change b8d8e9 d73027 b4d5e8
ch7_siga_fold_change b4d5e8 d73027 b8d8e9
h3_cd8_ifng_fold_change 4878b6 fee79c f4774c
h1_cd8_ifng_fold_change f0f9d9 74a1cb dc3f2f
bmnp_cd8_il2_fold_change e9f5e3 80adcf da392b
h3_cd8_il2_fold_change 4575b4 fdb574 fdb271
kan_h3_ivpm_fold_change 4575b4 fdb271 fdb574
ch7_titer_fold_change bedced d73027 aed2e6
n2_titer_fold_change 74a1cb dc3f2f f2fad4
h1_hai_gmt_fold_change 5080bb ef6e48 feeda5
h3_cd4_ifng_fold_change 4e7db8 ef6c48 feeda5`.trim().split('\n').map(r => r.split(' '));

// Row dendrogram: [height, left, right]; leaves are row numbers
const tree = [84, [8, 1, 2], [76, [16, 3, 4], [72,
  [25, [4, 5, [2, 6, [1, 7, 8]]], [8, [3, 9, [2, 10, 11]], [4, 12, 13]]],
  [33, 14, [32,
    [8, [4, 15, [2, 16, 17]], [6, 18, 19]],
    [23,
      [12, [4, 20, 21], [9, [3, 22, 23], [5, 24, [3, 25, [1, 26, 27]]]]],
      [12, [4, 28, [2, 29, 30]], [8, [3, 31, 32], [4, 33, [3, 34, [2, 35, 36]]]]]]]]]]];

const X = 180, Y = 151, W = 249, H = 35;
const grid = 'stroke="#999" stroke-width="1.200"';
const out = [];
const annotation = ['#deebf7', '#9ecae1', '#3182bd'];
annotation.forEach((c, i) => out.push(`<rect x="${X + i * W}" y="128" width="${W}" height="19" fill="${c}" ${grid}/>`));
out.push(`<text x="932" y="144" font-size="19" font-weight="700">pandora_cluster</text>`);
rows.forEach(([name, ...cells], r) => {
  cells.forEach((c, i) => out.push(`<rect x="${X + i * W}" y="${Y + r * H}" width="${W}" height="${H}" fill="#${c}" ${grid}/>`));
  out.push(`<text x="931" y="${Y + r * H + 26}">${name}</text>`);
});
let d = 'M304.500 126V42.500H678V68M553.500 126V68H802.500V126';
function walk(n) {
  if (typeof n === 'number') return [0, Y + (n - 0.5) * H];
  const [h, a, b] = n, [ha, ya] = walk(a), [hb, yb] = walk(b);
  d += `M${X - ha} ${ya}H${X - h}V${yb}H${X - hb}`;
  return [h, (ya + yb) / 2];
}
walk(tree);
out.push(`<path d="${d}" fill="none" stroke="#000" stroke-width="1.300"/>`);
out.push(`<defs><linearGradient id="scale" x1="0" y1="0" x2="0" y2="1">${['d73027', 'fc8d59', 'fee090', 'ffffbf', 'e0f3f8', '91bfdb', '4575b4'].map((c, i) => `<stop offset="${i / 6}" stop-color="#${c}"/>`).join('')}</linearGradient></defs>`);
out.push(`<rect x="1220" y="126" width="16" height="239" fill="url(#scale)"/>`);
['1', '0.5', '0', '-0.5', '-1'].forEach((t, i) => out.push(`<text x="1243" y="${149 + i * 52}">${t}</text>`));
out.push(`<text x="1284" y="140" font-size="19" font-weight="700">pandora_cluster</text>`);
annotation.forEach((c, i) => out.push(`<rect x="1283" y="${147 + i * 29}" width="29" height="29" fill="${c}" ${grid}/><text x="1318" y="${169 + i * 29}">${i + 1}</text>`));
document.getElementById('heatmap').innerHTML = out.join('');
</script>
</body>
</html>
